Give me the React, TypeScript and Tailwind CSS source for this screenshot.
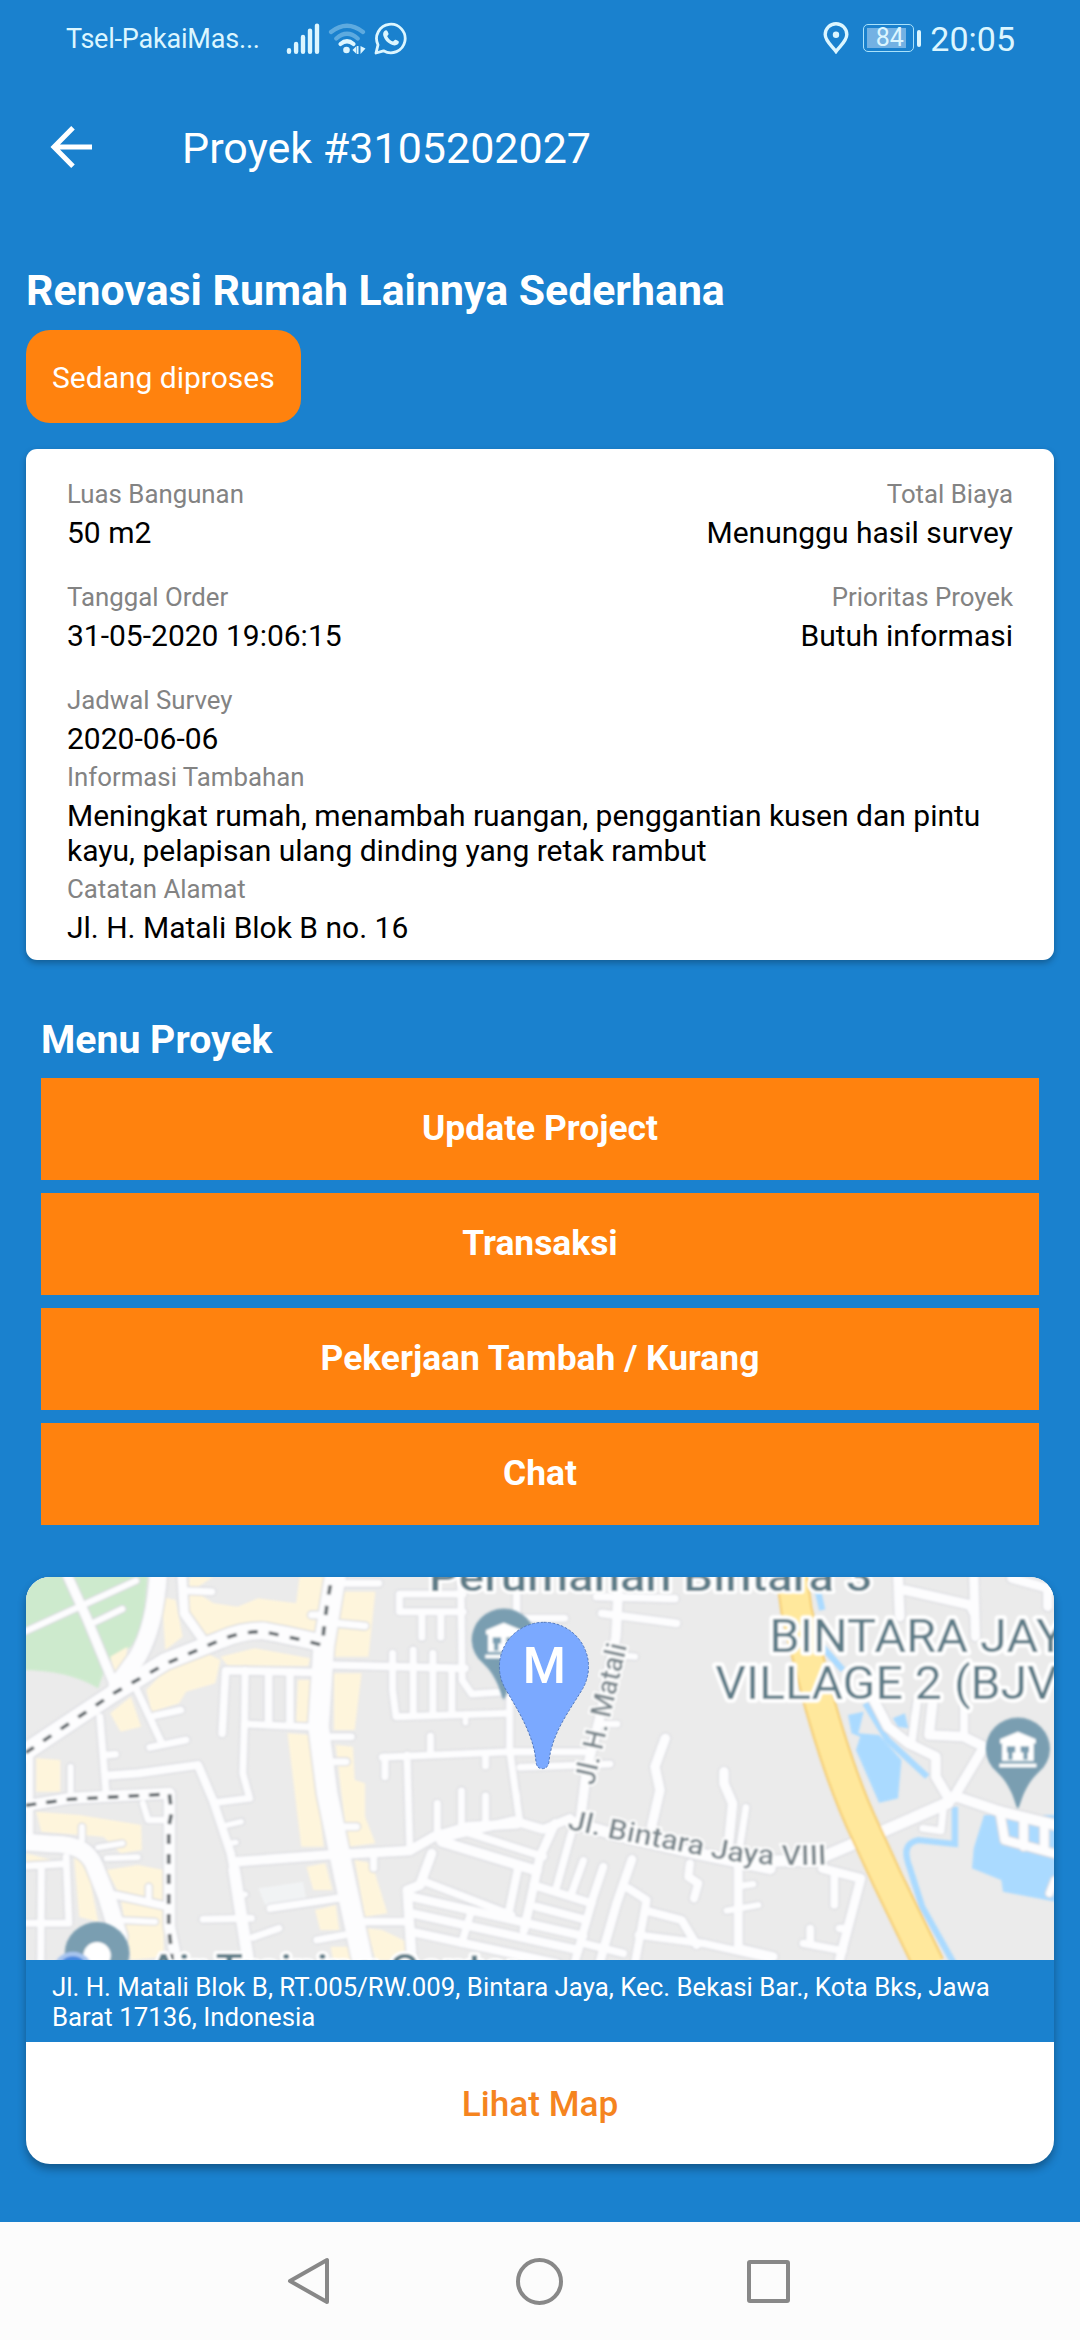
import React from "react";

type Road = [string, number];

/* Map geometry is kept in three tile spaces: west, centre and east. */
const WEST: Road[] = [
  ["M60 585L330 400L480 305L640 240Q700 212 760 212Q820 222 945 252", 50],
  ["M975 40L940 260L925 500L950 700L1000 950L1055 1215", 60],
  ["M460 40Q450 200 400 290L340 375", 50],
  ["M195 45L250 170L330 370", 26],
  ["M65 218L395 62M268 190L355 147", 17],
  ["M528 45L535 160L590 240", 26],
  ["M540 92L615 95", 20],
  ["M290 470L308 700M310 585L335 583", 20],
  ["M395 385L470 550M450 467L525 450M435 562L540 540", 20],
  ["M310 647L400 640L575 615L620 725L670 880L700 1050", 24],
  ["M680 930L722 1210", 34],
  ["M620 728L725 715L705 640L710 480L712 330", 20],
  ["M645 520L655 332L920 337", 22],
  ["M780 335V490M842 335V490", 22],
  ["M710 492L920 502", 20],
  ["M660 795L700 785M670 850L685 847M700 1005L712 1003", 16],
  ["M690 905L950 885L1190 872L1260 830L1360 800L1500 792", 28],
  ["M590 1078L730 1075M735 1132L810 1105M920 1140L1000 1125", 20],
  ["M785 1045L980 1015", 22],
  ["M60 740L200 715L492 700L492 1100L515 1215", 32],
  ["M205 620V705", 17],
  ["M85 560V860", 22],
  ["M60 845L150 852Q250 850 275 920L310 1010L345 1130", 50],
  ["M415 730L430 780H490", 18],
  ["M285 862L355 850M310 895L400 892M238 800V840M432 980V1020M340 1080L450 1085", 17],
  ["M335 1005L490 1040", 22],
  ["M192 890L200 1090H60M75 918L180 912M120 930L118 1215", 20],
  ["M960 530H1020M965 605H1005M1000 800H1035M905 165H960M980 190L1060 198M990 70H1100", 20],
  ["M1045 1085H1190L1200 1215", 22],
  ["M960 315L1350 325", 22],
  ["M1140 280V390L1150 470L1475 460M1200 270V468M1257 280V466M1312 325V464", 20],
  ["M1480 410V570L1510 790", 20],
  ["M1110 592L1480 575H1600M1118 590V650M1182 585L1190 865M1250 528V575M1410 582V618", 20],
  ["M1270 730V835M1340 692V805M1410 707V785", 20],
  ["M1345 102H1160V155H1345M1338 60L1342 360L1370 402L1450 397M1225 155V232M1280 155V232M1500 60V175H1640", 20],
  ["M1085 880V925", 20],
  ["M1352 470V488", 16],
];

const CENTRE: Road[] = [
  ["M230 800L430 752L520 778L600 745", 26],
  ["M555 760L510 860L480 1000L462 1080", 26],
  ["M604 790L560 950M640 872L605 970", 22],
  ["M700 890L670 980L615 1175", 24],
  ["M786 868L740 1000L690 1175", 26],
  ["M215 815L500 902", 30],
  ["M270 780L520 860", 22],
  ["M185 850L150 945L112 960L125 1180", 28],
  ["M165 935L425 1035", 22],
  ["M443 900L415 1035", 24],
  ["M490 945L665 1000M500 1010L650 1050", 24],
  ["M125 980L640 1098M125 1030L625 1140M125 1085L560 1180", 25],
  ["M305 1020L275 1120", 22],
  ["M775 955L830 990L795 1180", 24],
  ["M830 1022L935 1050L980 1125", 24],
  ["M805 1095L1000 1120L1200 1165M640 1120L760 1150", 22],
  ["M886 505L855 590L870 660L845 770", 28],
  ["M1062 605L1062 640L1088 700L1075 830", 28],
  ["M1128 712L1108 840", 20],
  ["M960 880L955 920L985 940L972 985", 24],
  ["M1105 890V1135L1210 1160", 26],
  ["M1070 1022L1165 1005M1110 948L1150 942", 18],
  ["M450 592L720 582M430 545H650", 20],
  ["M630 760L650 600L700 400L738 200L745 60", 28],
  ["M695 130L920 160M680 80L915 86", 22],
  ["M700 462H742M740 255L795 260", 18],
  ["M600 755L740 795L980 850L1200 895", 34],
];

const EAST: Road[] = [
  ["M610 905L800 900L1000 812L1185 728", 34],
  ["M960 400L1010 500L1070 550L1150 590L1150 650L1190 720", 28],
  ["M1200 715L1290 560L1230 530L1130 525L1140 430", 28],
  ["M1095 430L1080 545M1232 440V525", 22],
  ["M1205 708L1330 752L1510 798", 30],
  ["M1335 750L1350 840L1510 885M1405 780V860M1465 790V870", 24],
  ["M1172 740L1165 812L1112 805", 20],
  ["M820 925L932 955L870 1200", 26],
  ["M855 950V1035M765 1150L880 1172M785 1105V1150M870 1105H895", 22],
  ["M1040 45L1045 170", 28],
  ["M1060 90L1250 135L1262 160", 28],
  ["M1260 45L1265 230", 26],
  ["M1370 55L1500 92M1475 80V140", 26],
  ["M1495 960L1480 1000", 20],
];

const TILES = [
  { roads: WEST, t: "" },
  { roads: CENTRE, t: "translate(1074.5 30) scale(.968 1)" },
  { roads: EAST, t: "translate(1568 0)" },
];

const CREAM = [
  "M470 110L510 120L530 230L480 270Z",
  "M550 50L620 50L560 90L620 130L690 140L750 115L860 130L870 50L950 50L930 250L760 200L680 215L590 240L550 160Z",
  "M1010 95H1090L1070 290L970 290L990 95Z",
  "M320 290L370 260L360 340L335 340Z",
  "M425 390L480 330L600 280L640 300L625 370L540 395L520 430L440 455Z",
  "M640 290L740 265L900 295L895 318L660 315Z",
  "M320 460L380 410L410 500L350 515Z",
  "M865 360H900V485H860Z",
  "M970 340L1050 340L1030 510L970 510Z",
  "M835 520L905 525L940 860L875 860Z",
  "M975 555L1025 560L1030 660L1060 670L1060 770L1090 850L1010 860Z",
  "M105 595L175 600V695H105Z",
  "M105 755L230 765L410 795L412 870L350 880L300 830L120 815Z",
  "M75 880L150 900L75 910Z",
  "M215 890L250 900L285 1085L230 1070Z",
  "M310 930L400 915L475 930L475 1190L380 1200L350 1010Z",
  "M890 920L945 910L965 990L910 990ZM915 1050L975 1035L985 1110L930 1110Z",
  "M1030 900L1080 910L1125 1060L1060 1070Z",
  "M1065 1105L1110 1110L1190 1150L1190 1200L1090 1200ZM960 1160L1010 1160L1020 1210H970Z",
];

function Museum({ x, y }: { x: number; y: number }) {
  return (
    <g transform={`translate(${x} ${y})`}>
      <path d="M0 180C-8 180-10 120-62 70A93 93 0 1 1 62 70C10 120 8 180 0 180Z" fill="#7a9eb1" />
      <path d="M0-50L52-28V-14H-52V-28Z" fill="#fff" />
      <path d="M-46-16H46V38H-46Z" fill="#fff" />
      <path d="M-32-6H-8V12H-16V34H-28V12H-32ZM8-6H32V12H28V34H16V12H8Z" fill="#7a9eb1" />
      <path d="M-54 46H54V57H-54Z" fill="#fff" />
    </g>
  );
}

function MapView() {
  return (
    <svg className="block h-[383px] w-full" viewBox="75.5 51 2985.5 1149" preserveAspectRatio="none" fontFamily="Roboto, sans-serif">
      <defs>
        <filter id="soft" x="-5%" y="-5%" width="110%" height="110%">
          <feGaussianBlur stdDeviation="2.6" />
        </filter>
      </defs>
      <rect x="0" y="0" width="3136" height="1260" fill="#ebebeb" />
      <g filter="url(#soft)">
        <path d="M60 30H430L415 200L380 260L310 310L285 385Q200 330 60 330Z" fill="#cdeacd" />
        {CREAM.map((d) => (
          <path key={d} d={d} fill="#fef5dc" />
        ))}
        <path d="M750 985L880 965L890 1020L770 1035Z" fill="#f1f3f4" />
        <g transform="translate(1568 0)" fill="#aadaff">
          <path d="M895 465L940 455L925 520L985 525L1050 600L1040 715L985 728L918 570L930 530L905 520Z" />
          <path d="M1025 475L1060 460L1070 505L1040 500Z" />
          <path d="M1290 765H1500V1025L1345 995L1340 960L1255 925L1260 865Z" />
          <path d="M800 60L820 150M820 260L880 330M945 430L1010 540L1125 650" fill="none" stroke="#aadaff" strokeWidth="18" />
          <path d="M1205 740V852L1100 840Q1050 850 1070 910L1110 1040L1205 1215" fill="none" stroke="#aadaff" strokeWidth="18" />
        </g>
        {TILES.map(({ roads, t }, i) => (
          <g key={i} transform={t} fill="none" stroke="#d9dadf" strokeLinecap="round" strokeLinejoin="round">
            {roads.map(([d, w]) => (
              <path key={d} d={d} strokeWidth={w + 8} />
            ))}
          </g>
        ))}
        {TILES.map(({ roads, t }, i) => (
          <g key={i} transform={t} fill="none" stroke="#fdfdfe" strokeLinecap="round" strokeLinejoin="round">
            {roads.map(([d, w]) => (
              <path key={d} d={d} strokeWidth={w + 1} />
            ))}
          </g>
        ))}
        <g transform="translate(1568 0)" fill="none">
          <path d="M728 20L745 150L785 320L815 440Q870 640 930 780L1010 960L1130 1215" stroke="#f6cd70" strokeWidth="94" />
          <path d="M728 20L745 150L785 320L815 440Q870 640 930 780L1010 960L1130 1215" stroke="#ffe89c" strokeWidth="82" />
        </g>
        <g fill="none" stroke="#5f666a" strokeWidth="10">
          <path d="M75 578L330 400L480 312L640 240Q700 215 760 215Q820 225 935 255L950 130L962 60" strokeDasharray="28 34" />
          <path d="M75 736L200 718L492 702L498 760L490 800V1100L500 1200" strokeDasharray="30 30" />
        </g>
      </g>
      <g filter="url(#soft)" fill="#5d7b87" stroke="#fff" strokeLinejoin="round" style={{ paintOrder: "stroke" }}>
        <text x="1246" y="92" fontSize="122" strokeWidth="18" fontWeight="500" textLength="1288" lengthAdjust="spacingAndGlyphs">Perumahan Bintara 3</text>
        <text x="432" y="1270" fontSize="122" strokeWidth="18" fontWeight="500" textLength="1085" lengthAdjust="spacingAndGlyphs">Air Training Center</text>
        <text x="2234" y="275" fontSize="140" strokeWidth="22" textLength="860" lengthAdjust="spacingAndGlyphs">BINTARA JAY</text>
        <text x="2077" y="418" fontSize="140" strokeWidth="22" textLength="995" lengthAdjust="spacingAndGlyphs">VILLAGE 2 (BJV</text>
      </g>
      <g filter="url(#soft)" fill="#7b878d" stroke="#fff" strokeWidth="12" fontWeight="500" fontSize="84" style={{ paintOrder: "stroke" }}>
        <text transform="translate(1724 678) rotate(-77)" textLength="432" lengthAdjust="spacingAndGlyphs">Jl. H. Matali</text>
        <path id="bintara" d="M1646 806L1780 836L2030 885Q2200 925 2420 912" fill="none" stroke="none" />
        <text fontSize="84">
          <textPath href="#bintara" textLength="766" lengthAdjust="spacingAndGlyphs">Jl. Bintara Jaya VIII</textPath>
        </text>
      </g>
      <g filter="url(#soft)">
        <Museum x={1463} y={238} />
        <Museum x={2956} y={565} />
        <circle cx="282" cy="1180" r="94" fill="#7a9eb1" />
        <circle cx="282" cy="1186" r="40" fill="#fff" />
        <circle cx="212" cy="1232" r="50" fill="#4688e0" stroke="#a7c4ee" strokeWidth="14" />
      </g>
      <g transform="translate(1074.5 30) scale(.968 1)">
        <path
          d="M522 157A133 133 0 0 1 637 358C600 420 545 490 537 575Q534 596 517 596Q500 596 498 575C492 500 450 430 407 358A133 133 0 0 1 522 157Z"
          fill="#7ba9ff"
          stroke="#5379bd"
          strokeWidth="3"
          strokeDasharray="8 5"
        />
        <text x="523" y="340" textAnchor="middle" fontSize="148" fontWeight="500" fill="#fff">M</text>
      </g>
    </svg>
  );
}

function StatusBar() {
  return (
    <div className="flex h-[76px] items-center pl-[66px] pr-[65px] text-[#dcf6ff]">
      <span className="w-[220px] pt-[2px] text-[27px] leading-8 tracking-[-0.2px]">Tsel-PakaiMas...</span>
      <svg className="h-8 w-[34px]" viewBox="0 0 34 32" fill="none" stroke="currentColor" strokeWidth="4.4" strokeLinecap="round">
        <path d="M3 28.3v1.4M10.1 22v7.7M17 15v14.700M24 8.600v21.100M31 3.600v26.100" />
      </svg>
      <svg className="ml-[8px] h-8 w-[38px]" viewBox="0 0 38 32" fill="none" stroke="currentColor" strokeWidth="4.200" strokeLinecap="round">
        <path d="M3 10Q19-2.500 35 10M8.300 16.500Q19 7 29.700 16.500" opacity=".35" />
        <path d="M12.500 22Q19 16.500 25.500 22" />
        <circle cx="18.500" cy="28" r="3.300" fill="currentColor" stroke="none" />
        <path d="M24.500 28l4-4v8zM29 24h1.500v8h-1.500zM32.500 24v8l5-5.500z" fill="currentColor" stroke="none" />
      </svg>
      <svg className="ml-[8px] h-[34px] w-[33px]" viewBox="0 0 33 34" fill="none">
        <path d="M2 32l2-8.200A14.300 14.300 0 1 1 9.500 29.800z" stroke="currentColor" strokeWidth="2.800" strokeLinejoin="round" />
        <path d="M10.200 10.200c1.200-1.500 2.700-1.300 3.300 0l1 2.300c.4 1-.9 2-1.300 2.700 1.300 2.500 3.200 4.300 5.800 5.300.9-.7 1.700-2.200 2.800-1.700l2.500 1.300c1.100.7.500 2.300-.5 3.200-2 1.700-5 1.200-7.600-.2-3.300-1.800-5.200-4.200-6.500-7.300-.8-2-.9-4 .5-5.600z" fill="currentColor" />
      </svg>
      <svg className="ml-auto h-8 w-[26px]" viewBox="0 0 26 32" fill="none">
        <path d="M13 29.500C9 24 2.200 19 2.200 12.500a10.800 10.800 0 0 1 21.600 0C23.800 19 17 24 13 29.500z" stroke="currentColor" strokeWidth="3.400" />
        <circle cx="13" cy="12.800" r="3.200" fill="currentColor" />
      </svg>
      <div className="ml-[14px] flex h-[28px] w-[51px] items-center rounded-[5px] border-[1.500px] border-[#a9e2fb] p-[3px]">
        <div className="flex h-full w-[39px] items-center justify-center bg-[#73b1e3] pl-[6px] text-[25px]">84</div>
      </div>
      <div className="ml-[3px] h-[17px] w-[4px] rounded-full bg-current" />
      <span className="ml-[9px] pt-[2px] text-[34px] leading-8">20:05</span>
    </div>
  );
}

function Field({ label, value, right }: { label: string; value: string; right?: boolean }) {
  return (
    <div className={right ? "text-right" : ""}>
      <div className="text-[25.800px] leading-[31px] text-[#838383]">{label}</div>
      <div className="mt-[5px] text-[30px] leading-[35px] text-black">{value}</div>
    </div>
  );
}

const MENU = ["Update Project", "Transaksi", "Pekerjaan Tambah / Kurang", "Chat"];

export default function App() {
  return (
    <div className="flex h-[2340px] w-[1080px] flex-col overflow-hidden bg-[#1a81ce] font-[Roboto,sans-serif]">
      <StatusBar />
      <header className="flex h-[142px] items-center pl-[50px]">
        <svg className="h-[42px] w-[42px]" viewBox="0 0 42 42" fill="none" stroke="#fff" strokeWidth="5">
          <path d="M42 21H4M23 1.800L4 21l19 19.200" />
        </svg>
        <h1 className="ml-[90px] pt-[2px] text-[43px] leading-[50px] text-white">Proyek #3105202027</h1>
      </header>

      <main className="flex grow flex-col px-[26px] pt-[47px]">
        <h2 className="text-[42.800px] font-bold leading-[50px] text-white">Renovasi Rumah Lainnya Sederhana</h2>
        <div className="mt-[15px] flex h-[93px] items-center self-start rounded-[24px] bg-[#ff820e] px-[26px] pt-[2px] text-[30px] text-white">
          Sedang diproses
        </div>

        <section className="mt-[26px] h-[511px] rounded-[11px] bg-white px-[41px] pt-[30px] shadow-[0_3px_6px_rgba(0,0,0,0.28)]">
          <div className="flex flex-col gap-[32px]">
            <div className="flex justify-between">
              <Field label="Luas Bangunan" value="50 m2" />
              <Field label="Total Biaya" value="Menunggu hasil survey" right />
            </div>
            <div className="flex justify-between">
              <Field label="Tanggal Order" value="31-05-2020 19:06:15" />
              <Field label="Prioritas Proyek" value="Butuh informasi" right />
            </div>
            <div className="flex flex-col gap-[6px]">
              <Field label="Jadwal Survey" value="2020-06-06" />
              <Field
                label="Informasi Tambahan"
                value="Meningkat rumah, menambah ruangan, penggantian kusen dan pintu kayu, pelapisan ulang dinding yang retak rambut"
              />
              <Field label="Catatan Alamat" value="Jl. H. Matali Blok B no. 16" />
            </div>
          </div>
        </section>

        <section className="mt-[58px] px-[15px]">
          <h3 className="text-[39.200px] font-bold leading-[45px] text-white">Menu Proyek</h3>
          <div className="mt-[15px] flex flex-col gap-[13px]">
            {MENU.map((item) => (
              <button key={item} className="h-[102px] bg-[#ff820e] text-[35.400px] font-bold text-white">
                {item}
              </button>
            ))}
          </div>
        </section>

        <section className="mt-[52px] overflow-hidden rounded-[24px] bg-white shadow-[0_5px_9px_rgba(0,0,0,0.32)]">
          <MapView />
          <p className="h-[82px] bg-[#1a81ce] px-[26px] pt-[12px] text-[25.800px] leading-[30px] text-white">
            Jl. H. Matali Blok B, RT.005/RW.009, Bintara Jaya, Kec. Bekasi Bar., Kota Bks, Jawa Barat 17136, Indonesia
          </p>
          <button className="block h-[122px] w-full pt-[2px] text-[35.200px] font-medium text-[#f5841f]">Lihat Map</button>
        </section>
      </main>

      <nav className="flex h-[118px] items-center bg-[#fcfcfc]">
        <svg className="ml-[286px] h-[50px] w-[46px]" viewBox="0 0 46 50" fill="none" stroke="#888" strokeWidth="4" strokeLinejoin="round">
          <path d="M41 4v42L4 25z" />
        </svg>
        <div className="ml-[184px] h-[47px] w-[47px] rounded-full border-4 border-[#888]" />
        <div className="ml-[184px] h-[43px] w-[43px] rounded-[3px] border-4 border-[#888]" />
      </nav>
    </div>
  );
}
